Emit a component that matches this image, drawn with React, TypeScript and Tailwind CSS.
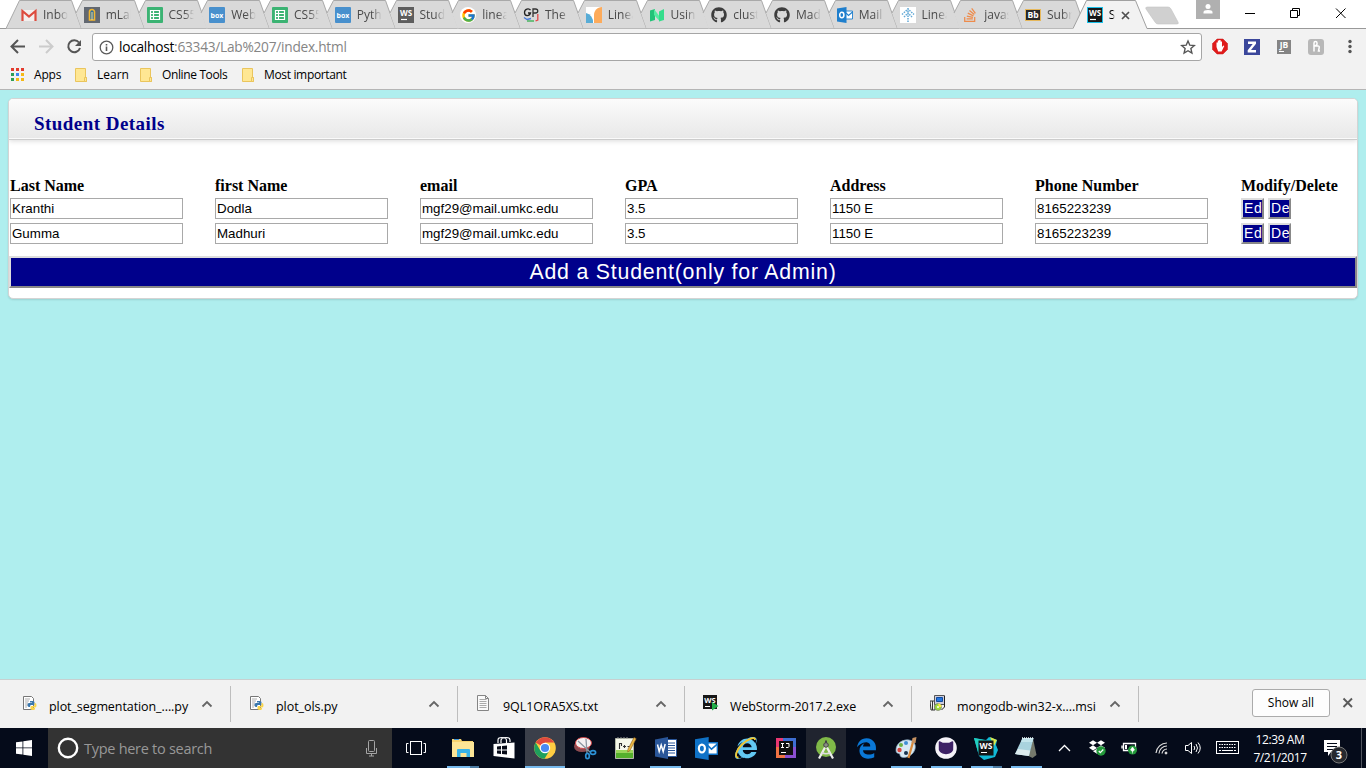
import React from "react";
import { FaGithub, FaStackOverflow, FaInternetExplorer, FaEdgeLegacy, FaDropbox } from "react-icons/fa6";
import { FcGoogle } from "react-icons/fc";

/* ---------- tab favicons ---------- */

const svgText = { fontFamily: "Open Sans, sans-serif", fontWeight: 700 } as const;

const Gmail = () => (
  <svg width="16" height="16" viewBox="0 0 16 16">
    <rect x="1" y="3" width="14" height="11" fill="#f3efee" />
    <path d="M1.500 14V4L8 9.500 14.500 4v10" fill="none" stroke="#dd4b3e" strokeWidth="2.200" />
  </svg>
);
const MLab = () => (
  <svg width="16" height="16" viewBox="0 0 16 16">
    <rect width="16" height="16" fill="#626871" />
    <path d="M5.500 13V5a2.500 2.500 0 0 1 5 0v8z" fill="#2f6fa3" stroke="#f2b631" strokeWidth="1.600" />
    <path d="M8 5v8" stroke="#fbe08d" />
  </svg>
);
const Sheets = () => (
  <svg width="16" height="16" viewBox="0 0 16 16">
    <rect width="16" height="16" rx="1" fill="#3bb373" />
    <path d="M3.500 3.500h9v9h-9zM6.500 3.500v9M3.500 6.500h9M3.500 9.500h9" fill="none" stroke="#fff" strokeWidth="1.200" />
  </svg>
);
const Box = () => (
  <svg width="16" height="16" viewBox="0 0 16 16">
    <rect width="16" height="16" rx="1" fill="#4890cd" />
    <text x="8" y="10.600" fontSize="7" textAnchor="middle" fill="#fff" style={svgText}>box</text>
  </svg>
);
const Ws = ({ bg = "#5d5d5d", edge = "#5d5d5d" }: { bg?: string; edge?: string }) => (
  <svg width="16" height="16" viewBox="0 0 16 16" className="shrink-0">
    <rect x=".5" y=".5" width="15" height="15" fill={bg} stroke={edge} />
    <text x="8" y="9" fontSize="8" textAnchor="middle" fill="#fff" style={svgText}>WS</text>
    <path d="M3 12.500h6" stroke="#fff" strokeWidth="1.200" />
  </svg>
);
const Google = () => (
  <span className="flex size-4 items-center justify-center rounded-full bg-white"><FcGoogle size={15} /></span>
);
const Gp = () => (
  <svg width="16" height="16" viewBox="0 0 16 16" fill="none" strokeWidth="1.300">
    <path d="M7.500 3.200C6 1 1.500 1.500 1.500 5.500s5 4 6 .5H5" stroke="#222" />
    <path d="M10 10V2h2.500c3 0 3 4 0 4H10" stroke="#333" />
    <path d="M1 10.500l3 2 4-1" stroke="#4579d8" />
    <path d="M4 14h7" stroke="#32ad4c" />
    <path d="M14.800 7v6l-2.300 1" stroke="#e54848" />
  </svg>
);
const Split = () => (
  <svg width="16" height="16" viewBox="0 0 16 16">
    <rect width="16" height="16" fill="#fff" />
    <path d="M0 6a9 9 0 0 1 7 10H0z" fill="#58acd6" />
    <path d="M16 0v16H8V8c0-4 3-8 8-8z" fill="#fdab5b" />
  </svg>
);
const Medium = () => (
  <svg width="16" height="16" viewBox="0 0 16 16">
    <path d="M1 3.500l5-1.500v11l-5 1.500z" fill="#23c278" />
    <path d="M5 2l6 8v4.500L5 8z" fill="#55eba1" />
    <path d="M10 4.500l5-2.500v11l-5 1.500z" fill="#35dd8c" />
  </svg>
);
const OutlookMark = ({ size = 16, c = "#1f7fcd" }: { size?: number; c?: string }) => (
  <svg width={size} height={size} viewBox="0 0 16 16">
    <path d="M8.500 4H15.500v8h-7z" fill="#fff" stroke={c} strokeWidth=".9" />
    <path d="M9 6l2.500 2.500L15.500 5" fill="none" stroke={c} strokeWidth="1.100" />
    <path d="M0 1.500L9.500 0v16L0 14.500z" fill={c} />
    <ellipse cx="4.800" cy="8" rx="2.100" ry="2.700" fill="none" stroke="#fff" strokeWidth="1.500" />
  </svg>
);
const Tableau = () => (
  <svg width="16" height="16" viewBox="0 0 16 16">
    <rect width="16" height="16" fill="#fff" />
    <path d="M8 1v14M2 7.500L8 2l6 5.500M4 10l4-4 4 4" fill="none" stroke="#60a8d6" strokeWidth="1.500" strokeDasharray="1.500 1" />
  </svg>
);
const Bb = () => (
  <svg width="16" height="16" viewBox="0 0 16 16">
    <rect x=".5" y="2.500" width="15" height="11" fill="#282828" stroke="#e6b85c" />
    <text x="8" y="11.300" fontSize="8.500" textAnchor="middle" fill="#fff" style={svgText}>Bb</text>
  </svg>
);

type TabData = { title: string; icon: React.ReactNode };
const tabs: TabData[] = [
  { title: "Inbo", icon: <Gmail /> },
  { title: "mLal", icon: <MLab /> },
  { title: "CS55", icon: <Sheets /> },
  { title: "Web", icon: <Box /> },
  { title: "CS55", icon: <Sheets /> },
  { title: "Pyth", icon: <Box /> },
  { title: "Stud", icon: <Ws /> },
  { title: "linea", icon: <Google /> },
  { title: "The", icon: <Gp /> },
  { title: "Linea", icon: <Split /> },
  { title: "Usin", icon: <Medium /> },
  { title: "clust", icon: <FaGithub size={16} color="#3d3d3d" /> },
  { title: "Mad", icon: <FaGithub size={16} color="#3d3d3d" /> },
  { title: "Mail", icon: <OutlookMark /> },
  { title: "Linea", icon: <Tableau /> },
  { title: "javas", icon: <FaStackOverflow size={16} color="#ee8b4b" /> },
  { title: "Subr", icon: <Bb /> },
];

const Fade = ({ children, className }: { children: React.ReactNode; className: string }) => (
  <span className={`overflow-hidden whitespace-nowrap [mask-image:linear-gradient(to_right,#000_60%,transparent)] ${className}`}>{children}</span>
);

function Tab({ tab, first }: { tab: TabData; first: boolean }) {
  return (
    <div className="relative h-[29px] w-[62.750px] shrink-0">
      <svg className="absolute left-0 top-0" width="77" height="29">
        <path d={first ? "M0 28.500L13.500.5H65.500L75.500 28.500z" : "M7 13L13.500.5H65.500L75.500 28.500H12.500z"} fill="#d9d9d9" />
        <path d={first ? "M0 28.500L13.500.5H65.500L75.500 28.500" : "M7 13L13.500.5H65.500L75.500 28.500"} fill="none" stroke="#a9a9a9" />
      </svg>
      <div className="relative flex h-[29px] items-center pl-[15px] pt-px">
        <span className="flex size-4 shrink-0 items-center justify-center">{tab.icon}</span>
        <Fade className="ml-[6px] w-[25px] text-[12px] text-[#4a4a4a]">{tab.title}</Fade>
      </div>
    </div>
  );
}

function TabStrip() {
  return (
    <div className="flex h-[29px] border-b border-[#999] bg-white pl-[6px]">
      {tabs.map((t, i) => <Tab key={i} tab={t} first={i === 0} />)}
      <div className="relative h-[29px] w-[72px] shrink-0">
        <svg className="absolute left-0 top-0" width="76" height="29">
          <path d="M0 28.500L13.500.5H62.500L74 28.500V29H0z" fill="#f2f2f2" />
          <path d="M0 28.500L13.500.5H62.500L74 28.500" fill="none" stroke="#a0a0a0" />
        </svg>
        <div className="relative flex h-[29px] items-center pl-[14px] pt-px">
          <Ws bg="#171717" edge="#19bfe8" />
          <Fade className="ml-[6px] w-[6px] text-[12px] text-black">S</Fade>
          <svg className="ml-[6px]" width="9" height="9"><path d="M1 1l7 7M8 1L1 8" stroke="#505050" strokeWidth="1.700" /></svg>
        </div>
      </div>
      <svg className="mt-[6px]" width="36" height="20">
        <path d="M2.500 1H23q2 0 3 2l7 13q1 2-1 2H13q-2 0-3-2L1 3q-1-2 1.500-2z" fill="#d0d0d0" stroke="#c2c2c2" strokeWidth=".6" />
      </svg>
      <div className="ml-auto flex h-[27px] items-start">
        <svg width="24" height="19" className="mr-[25px] bg-[#b0b0b0]">
          <circle cx="12" cy="6.500" r="2.500" fill="#fff" /><path d="M7.500 13.500V12q0-2 4.500-2t4.500 2v1.500z" fill="#fff" />
        </svg>
        <svg width="121" height="27" fill="none" stroke="#000">
          <path d="M0 13.500h10M45.500 10.500h7v7h-7zM47.500 10.500v-2h7v7h-2M91 8.500l9.500 9.500M100.500 8.500L91 18" />
        </svg>
      </div>
    </div>
  );
}

/* ---------- toolbar ---------- */

function Toolbar() {
  return (
    <div className="flex h-[35px] items-center bg-[#f2f2f2] pt-px">
      <svg width="92" height="28" fill="none" strokeWidth="2">
        <path d="M25 13.500H12M18 7l-6.500 6.500L18 20" stroke="#555" />
        <path d="M39 13.500h13M46 7l6.500 6.500L46 20" stroke="#ccc" />
        <path d="M79 9.500A6 6 0 1 0 80 15" stroke="#555" />
        <path d="M81 7v6h-6z" fill="#555" />
      </svg>
      <div className="flex h-7 w-[1110px] items-center rounded-[3px] border border-[#a6a6a6] bg-white pl-[6px] pr-[5px]">
        <svg width="15" height="15" fill="none" stroke="#5a5a5a">
          <circle cx="7.500" cy="7.500" r="6.300" strokeWidth="1.300" /><path d="M7.500 6.500v4.500M7.500 4v1.500" strokeWidth="1.600" />
        </svg>
        <span className="ml-[5px] whitespace-nowrap text-[13.700px] leading-5 tracking-[-0.250px] text-[#858585]"><span className="text-black">localhost</span>:63343/Lab%207/index.html</span>
        <svg className="ml-auto" width="16" height="16" viewBox="0 0 16 16">
          <path d="M8 2l1.800 4.200 4.500.4-3.400 3 1 4.400L8 11.700 4.100 14l1-4.400-3.400-3 4.500-.4z" fill="none" stroke="#555" strokeWidth="1.400" />
        </svg>
      </div>
      <svg width="164" height="28">
        <path d="M15 6h6l4.500 4.500v6L21 21h-6l-4.500-4.500v-6z" fill="#e01b1b" stroke="#c91818" strokeWidth=".5" />
        <path d="M14.500 14V9.500h1.300V13V7.500h1.400V13V7h1.400v6V8.500H20V14l1.300-1.500 1 .6-2.700 5.400h-3.400z" fill="#fff" />
        <rect x="42" y="6" width="16" height="16" fill="#3b479b" />
        <path d="M46 8.500h8v2.300L49 17h5v2.500h-8.300v-2.300l5-6.200H46z" fill="#fff" />
        <rect x="75" y="7" width="14" height="14" fill="#858585" />
        <text x="82" y="15" fontSize="8.500" fill="#fff" textAnchor="middle" style={svgText}>JB</text>
        <path d="M77 18.500h5" stroke="#fff" />
        <rect x="106" y="6" width="16" height="16" rx="3" fill="#b8b8b8" />
        <path d="M112 18.500V10q0-1.500 1.500-1.500T115 10v1q0 1.500-3 2h4q1.500 0 1.200 1.500l-.7 3.500h1.500" fill="none" stroke="#fff" strokeWidth="1.500" />
        <g fill="#555"><circle cx="148" cy="8.500" r="1.700" /><circle cx="148" cy="13.500" r="1.700" /><circle cx="148" cy="18.500" r="1.700" /></g>
      </svg>
    </div>
  );
}

const appDots = ["#e33b2e", "#e33b2e", "#e33b2e", "#2f9e57", "#3f86f1", "#f5b916", "#2f9e57", "#f5b916", "#f5b916"];

const Folder = () => (
  <svg width="14" height="14" viewBox="0 0 14 14">
    <path d="M.5.5h10v9h1v4H.5z" fill="#ffe793" stroke="#eac55d" /><path d="M9.500 9.500h2v4h-2z" fill="#ffe793" stroke="#eac55d" />
  </svg>
);

function Bookmarks() {
  return (
    <div className="flex h-[26px] items-start border-b border-[#b5b5b5] bg-[#f2f2f2] pl-[11px] pt-[2px] text-[12px] leading-[18px] text-black">
      <svg className="mr-[10px] mt-[2px]" width="13" height="13">
        {appDots.map((c, i) => <rect key={i} x={(i % 3) * 5} y={Math.floor(i / 3) * 5} width="3" height="3" fill={c} />)}
      </svg>
      <span className="w-[41px] tracking-[-0.200px]">Apps</span>
      <span className="mt-[2px] w-[22px]"><Folder /></span>
      <span className="w-[43px]">Learn</span>
      <span className="mt-[2px] w-[22px]"><Folder /></span>
      <span className="w-[80px] whitespace-nowrap tracking-[-0.370px]">Online Tools</span>
      <span className="mt-[2px] w-[22px]"><Folder /></span>
      <span className="whitespace-nowrap tracking-[-0.340px]">Most important</span>
    </div>
  );
}

/* ---------- page ---------- */

const columns = ["Last Name", "first Name", "email", "GPA", "Address", "Phone Number"];
const students = [
  ["Kranthi", "Dodla", "mgf29@mail.umkc.edu", "3.5", "1150 E", "8165223239"],
  ["Gumma", "Madhuri", "mgf29@mail.umkc.edu", "3.5", "1150 E", "8165223239"],
];
const bevel = "border-2 border-t-[#ddd] border-l-[#ddd] border-r-[#888] border-b-[#888] bg-[#00008b] text-white";

function StudentPage() {
  return (
    <main className="h-[589px] bg-[#afeeee] px-2 pt-2">
      <section className="h-[201px] w-[1350px] overflow-hidden rounded-[5px] border border-[#d4d4d4] bg-white shadow-[0_1px_2px_rgba(0,0,0,0.12)]">
        <h1 className="flex h-[41px] items-center border-b border-[#ccc] bg-linear-to-b from-[#fbfbfb] to-[#e8e8e8] pl-[25px] pt-[11px] font-['Liberation_Serif',serif] text-[19px] font-bold tracking-[0.450px] text-[#00008b] shadow-[inset_0_-1px_0_#fafafa,0_1px_5px_rgba(0,0,0,0.15)]">Student Details</h1>
        <div className="mt-[36px] grid grid-cols-[205px_205px_205px_205px_205px_206px_auto] pl-px font-['Liberation_Serif',serif] text-[16px] font-bold leading-[20px] text-black">
          {columns.map((c) => <span key={c}>{c}</span>)}
          <span>Modify/Delete</span>
        </div>
        <div className="mt-[2px] flex flex-col gap-1 pl-px font-['Liberation_Sans',sans-serif] text-[13.330px] text-black">
          {students.map((s, i) => (
            <div key={i} className="grid h-[21px] grid-cols-[205px_205px_205px_205px_205px_206px_auto]">
              {s.map((v, j) => (
                <input key={j} readOnly value={v} className="block h-[21px] w-[173px] border border-[#a9a9a9] bg-white px-px" />
              ))}
              <div className="flex gap-1">
                {["Edit", "Delete"].map((b) => (
                  <button key={b} className={`h-[21px] w-[23px] overflow-hidden whitespace-nowrap pl-px text-left text-[14px] leading-[17px] tracking-[0.700px] ${bevel}`}>{b}</button>
                ))}
              </div>
            </div>
          ))}
        </div>
        <button className={`mt-3 block h-8 w-full text-center font-['Liberation_Sans',sans-serif] text-[21.300px] leading-[28px] tracking-[0.790px] ${bevel}`}>Add a Student(only for Admin)</button>
      </section>
    </main>
  );
}

/* ---------- downloads ---------- */

const PyFile = () => (
  <svg width="16" height="16" viewBox="0 0 16 16">
    <path d="M1.500 1.500h8l2 2v11h-10z" fill="#fff" stroke="#777" />
    <path d="M3 4h5M3 6h4M3 8h3M3 10h3M3 12h2" stroke="#999" strokeWidth=".8" />
    <path d="M8 6h3q1.500 0 1.500 1.500V10H9q-1 0-1 2H7q-1.500 0-1.500-2T7 8h3V7.500H8z" fill="#3b78ae" />
    <path d="M12.500 8H13q1.500 0 1.500 2.300T13 12.500h-2v.5h2v1q0 1-2 1t-2.500-1v-2q0-1 1-1h2q1 0 1-1z" fill="#fbd64a" />
  </svg>
);
const TxtFile = () => (
  <svg width="16" height="18" viewBox="1 0 16 18">
    <path d="M2.500 1.500h8l3 3v12h-11z" fill="#fafafa" stroke="#858585" />
    <path d="M4.500 5.500h7M4.500 7.500h7M4.500 9.500h7M4.500 11.500h7M4.500 13.500h7" stroke="#aaa" /><path d="M10.500 1.500v3h3" fill="none" stroke="#858585" />
  </svg>
);
const WsExe = () => (
  <svg width="16" height="16" viewBox="0 0 16 16">
    <rect y="0" width="14" height="14" fill="#171717" />
    <text x="7" y="7.500" fontSize="7.500" textAnchor="middle" fill="#fff" style={svgText}>WS</text>
    <path d="M2 11.500h5" stroke="#fff" /><path d="M9 7l6.500 4L9 15.500z" fill="#22ae48" />
  </svg>
);
const Msi = () => (
  <svg width="17" height="17" viewBox="1 0 17 17">
    <path d="M1 6h5v9H2z" fill="#f3f3f3" stroke="#333" /><path d="M3.500 6v9" stroke="#333" />
    <path d="M5.500.5h10v9h-10z" fill="#ccd" stroke="#555" /><path d="M7.500 2.500h6v4h-6z" fill="#2376e0" stroke="#124a9c" />
    <path d="M15.500 1v11l-3 3" stroke="#222" fill="none" /><circle cx="9" cy="12" r="3.500" fill="#9edb3d" stroke="#777" strokeWidth=".7" /><circle cx="9" cy="12" r="1" fill="#fff" />
    <path d="M9 8.500a3.500 3.500 0 0 1 3.500 3.500H10z" fill="#ffe942" />
  </svg>
);

const downloads = [
  { name: "plot_segmentation_....py", icon: <PyFile />, track: "tracking-[-0.080px]" },
  { name: "plot_ols.py", icon: <PyFile />, track: "tracking-[-0.050px]" },
  { name: "9QL1ORA5XS.txt", icon: <TxtFile />, track: "tracking-[-0.050px]" },
  { name: "WebStorm-2017.2.exe", icon: <WsExe />, track: "tracking-[-0.130px]" },
  { name: "mongodb-win32-x....msi", icon: <Msi />, track: "tracking-[-0.030px]" },
];

function Downloads() {
  return (
    <div className="flex h-[49px] border-t border-[#c8d0d0] bg-[#f2f2f2] text-[12.500px] text-black">
      {downloads.map((d, i) => (
        <div key={i} className={`mt-[6px] flex h-9 shrink-0 items-center border-r border-[#bebebe] pr-[17px] ${i === 0 ? "w-[231px] pl-[22px]" : "w-[227px] pl-[18px]"}`}>
          <span className="-mt-[2px] w-[27px]">{d.icon}</span>
          <span className={`whitespace-nowrap pt-[5px] leading-5 ${d.track}`}>{d.name}</span>
          <svg className="-mt-[1px] ml-auto" width="12" height="8"><path d="M1.500 6.500L6 2l4.500 4.500" fill="none" stroke="#666" strokeWidth="1.800" /></svg>
        </div>
      ))}
      <button className="ml-auto mt-[9px] flex h-7 w-[78px] items-center justify-center rounded-[3px] border border-[#ababab] bg-[#fdfdfd] text-[12px]">Show all</button>
      <svg className="ml-[12px] mr-[12px] mt-[17px]" width="12" height="12"><path d="M1.500 1.500l8.500 8.500M10 1.500L1.500 10" stroke="#5a5a5a" strokeWidth="1.900" /></svg>
    </div>
  );
}

/* ---------- taskbar ---------- */

const Explorer = () => (
  <svg width="24" height="24" viewBox="0 0 24 24">
    <path d="M1 3h9l1 2h11v16H1z" fill="#f7d36e" /><path d="M3 3h5v1H3z" fill="#3f93d6" /><path d="M1 6h22v15H1z" fill="#fde596" />
    <path d="M6 21v-7q0-1 1-1h11q1 0 1 1v7h-3.500v-4h-6v4z" fill="#39b3e8" />
  </svg>
);
const Store = () => (
  <svg width="24" height="24" viewBox="0 0 24 24">
    <path d="M1.500 8l21-1.500v16L1.500 20z" fill="#fff" /><path d="M6 7V4q0-2.500 4-2.500T14.500 4v3M9 7V4q1-2.500 5-2.500T18 4v2" fill="none" stroke="#fff" strokeWidth="1.200" />
    <path d="M5 10.500l4-.4v3.400H5zM10 10l5-.5v4h-5zM5 14.500h4V18l-4-.4zM10 14.500h5v4l-5-.5z" fill="#070b18" />
  </svg>
);
const Chrome = () => (
  <svg width="24" height="24" viewBox="0 0 24 24">
    <circle cx="12" cy="12" r="10.800" fill="#ffcd42" />
    <path d="M12 12L2.650 6.600A10.800 10.800 0 0 1 21.350 6.600H12z" fill="#e04a3f" />
    <path d="M2.650 6.600A10.800 10.800 0 0 0 11.500 22.800L16.500 14.600 12 12 7.300 14.600z" fill="#1fa05d" />
    <circle cx="12" cy="12" r="5.200" fill="#fff" /><circle cx="12" cy="12" r="4.100" fill="#4a8af4" />
  </svg>
);
const Snip = () => (
  <svg width="24" height="24" viewBox="0 0 24 24" fill="none">
    <ellipse cx="9" cy="10.500" rx="8" ry="5.500" fill="#8d4a50" /><ellipse cx="10.500" cy="7" rx="8" ry="5.500" fill="#f4f1f2" stroke="#d14547" />
    <path d="M5 5l12 11M13 3l1 14" stroke="#8b96a1" strokeWidth="1.300" />
    <ellipse cx="14.500" cy="20" rx="1.800" ry="2.700" stroke="#2c91d6" strokeWidth="1.700" /><ellipse cx="20" cy="16.500" rx="2.600" ry="1.800" stroke="#2c91d6" strokeWidth="1.700" />
  </svg>
);
const Npp = () => (
  <svg width="24" height="24" viewBox="0 0 24 24">
    <path d="M2.500 2.500h18v20h-18z" fill="#f5f8ea" stroke="#b4b9a8" /><path d="M3 14h17v8H3z" fill="#9bd65a" /><path d="M3 17h17v5H3z" fill="#55b02c" />
    <path d="M5 1v2M8 1v2M11 1v2M14 1v2" stroke="#999" /><path d="M6.500 7v6M6 7.500h2.500v2.500M10 10.500h3M11.500 9v3M14.500 10.500h3" stroke="#333" fill="none" strokeWidth="1.100" />
    <path d="M15 13l6-11.500 2.200 1.200L17 14.500 14.700 16z" fill="#e9b742" stroke="#8d5e20" strokeWidth=".6" />
  </svg>
);
const Word = () => (
  <svg width="24" height="24" viewBox="0 0 24 24">
    <path d="M13 3.500h9.500v17H13z" fill="#fff" stroke="#2a5699" /><path d="M14 7h7M14 9.500h7M14 12h7M14 14.500h7M14 17h7" stroke="#2a5699" />
    <path d="M1 3.500L14 1v22L1 20.500z" fill="#2a5699" /><path d="M3.500 8.500l1.700 7 2-6.500 2 6.500 2-7.500" fill="none" stroke="#fff" strokeWidth="1.500" />
  </svg>
);
const Ij = () => (
  <svg width="22" height="22" viewBox="0 0 22 22">
    <path d="M1 1h10L1 16z" fill="#e93772" /><path d="M8 1h13v11H8z" fill="#3e6ed2" /><path d="M1 10h9v11H1z" fill="#f07243" /><path d="M10 10h11v11H10z" fill="#8b4fd0" />
    <rect x="4" y="4" width="14" height="14" fill="#101010" /><path d="M6 6.500h3M7.500 6.500v4M6 10.500h3M11 6.500h3v3q0 1.500-3 1M6 15.500h5" fill="none" stroke="#fff" />
  </svg>
);
const Studio = () => (
  <svg width="24" height="24" viewBox="0 0 24 24">
    <circle cx="12" cy="11" r="10" fill="#80b948" /><path d="M12 4.500v3" stroke="#444" strokeWidth="2" /><circle cx="12" cy="9" r="2.300" fill="#8a8f86" stroke="#444" />
    <path d="M11 11.500L5 22.500M13 11.500l6 11" stroke="#eee" strokeWidth="2.200" /><path d="M7.500 16.500q4.500 2.500 9 0" stroke="#ddd" strokeWidth="1.500" fill="none" />
  </svg>
);
const Paint = () => (
  <svg width="26" height="24" viewBox="0 0 26 24">
    <path d="M3 14C3 8 9 3 16 4s8 8 4 13-13 6-13 2c0-3-4 0-4-5z" fill="#d7e8f3" stroke="#86a8c0" strokeWidth=".7" />
    <circle cx="6.500" cy="14" r="2.200" fill="#d6453e" /><circle cx="8" cy="9" r="2" fill="#6bb044" /><circle cx="13" cy="7" r="2" fill="#3f8dd4" /><circle cx="13" cy="17" r="2" fill="#16324f" />
    <path d="M15.500 22L20 6" stroke="#d98a3c" strokeWidth="2.200" /><path d="M18.500 7l1-5 4-1-1 6z" fill="#c69262" />
  </svg>
);
const Desktop = () => (
  <svg width="24" height="24" viewBox="0 0 24 24">
    <circle cx="12" cy="12" r="10.800" fill="#f5f3f8" /><path d="M5.500 6l3 1.500h7l3-1.500v4q1 7.500-6.500 7.500T5.500 10z" fill="#3d2165" stroke="#3d2165" strokeWidth="1.500" strokeLinejoin="round" />
  </svg>
);
const WsBig = () => (
  <svg width="24" height="24" viewBox="0 0 24 24">
    <path d="M0 2l12 2 3-3 8 3-1 5 2 5-3 7-11 3-5-4z" fill="#11b9d5" /><path d="M0 2l10 2-6 12z" fill="#22d0c0" /><path d="M16 1l7 3-3 6z" fill="#d9e64c" />
    <rect x="4.500" y="4.500" width="15" height="15" fill="#151515" /><text x="12" y="12.800" fontSize="8.500" textAnchor="middle" fill="#fff" style={svgText}>WS</text><path d="M7 16.500h6" stroke="#fff" />
  </svg>
);
const Notepad = () => (
  <svg width="24" height="24" viewBox="0 0 24 24">
    <path d="M19 2.500l3.500 16.500-4 3-4-2z" fill="#75796c" /><path d="M8.500 2h11l-4.500 18L1 18z" fill="#a9d3de" /><path d="M4 13l12 1.500L14.800 20 1 18z" fill="#dcebee" /><path d="M8.500 2h11l-1 4H7z" fill="#c4e5ec" />
    <path d="M8 2h11" stroke="#ecf6f7" strokeWidth="1.500" strokeDasharray="1 1" />
  </svg>
);
const Ie = () => (
  <span className="relative flex size-6 items-center justify-center">
    <FaInternetExplorer size={22} color="#62c8f3" />
    <svg className="absolute inset-0" width="24" height="24"><path d="M4.500 21.500C0 22 2 14 8 8.500S21 0 21 4" fill="none" stroke="#f3c52b" strokeWidth="1.800" /></svg>
  </span>
);

const apps = [
  { icon: <Explorer />, cls: "w-[40px]", bar: "w-8 bg-linear-to-r from-[#76b9ed] from-72% to-[#4c7ba2] to-72%" },
  { icon: <Store />, cls: "w-[42px]", bar: "" },
  { icon: <Chrome />, cls: "w-[40px] bg-[#3b3f4a]", bar: "w-10 bg-[#76b9ed]" },
  { icon: <Snip />, cls: "w-[40px]", bar: "" },
  { icon: <Npp />, cls: "w-[40px]", bar: "" },
  { icon: <Word />, cls: "w-[41px]", bar: "w-[31px] bg-[#76b9ed]" },
  { icon: <OutlookMark size={23} c="#0f72c7" />, cls: "w-[40px]", bar: "" },
  { icon: <Ie />, cls: "w-[40px]", bar: "" },
  { icon: <Ij />, cls: "w-[40px]", bar: "" },
  { icon: <Studio />, cls: "w-[40px] bg-[#20242f]", bar: "" },
  { icon: <FaEdgeLegacy size={21} color="#0a78d7" />, cls: "w-[40px]", bar: "" },
  { icon: <Paint />, cls: "w-[40px]", bar: "w-[31px] bg-[#76b9ed]" },
  { icon: <Desktop />, cls: "w-[40px]", bar: "w-[31px] bg-[#76b9ed]" },
  { icon: <WsBig />, cls: "w-[40px]", bar: "w-[31px] bg-linear-to-r from-[#76b9ed] from-72% to-[#4c7ba2] to-72%" },
  { icon: <Notepad />, cls: "w-[40px]", bar: "w-[31px] bg-[#76b9ed]" },
];

function Taskbar() {
  return (
    <div className="flex h-10 bg-[#050b1a]">
      <div className="flex w-12 items-center justify-center">
        <svg width="16" height="16" fill="#fff"><path d="M0 2.300l6.500-.9v6.100H0zM7.300 1.200L16 0v7.500H7.300zM0 8.300h6.500v6.200L0 13.700zM7.300 8.300H16V16l-8.700-1.300z" /></svg>
      </div>
      <div className="flex w-[344px] items-center bg-[#333] pl-[8px] text-[14.500px] text-[#989898]">
        <svg width="24" height="24"><circle cx="12" cy="12" r="9.200" fill="none" stroke="#fff" strokeWidth="2.400" /></svg>
        <span className="ml-1 whitespace-nowrap pt-px tracking-[-0.280px]">Type here to search</span>
        <svg className="ml-auto mr-[14px]" width="13" height="17" fill="none" stroke="#a5a5a5"><rect x="3.500" y=".5" width="6" height="11" rx="1" /><path d="M1.500 8v5.500h10V8M6.500 13.500v2.500M4 16h5" /></svg>
      </div>
      <div className="flex w-[50px] items-center justify-center pr-[2px]">
        <svg width="22" height="16" fill="none" stroke="#fff"><rect x="5.500" y="1.500" width="11" height="13" /><path d="M3.500 3.500h-2v9h2M18.500 3.500h2v9h-2" /></svg>
      </div>
      {apps.map((a, i) => (
        <div key={i} className={`relative flex shrink-0 items-center justify-center ${i < 2 ? "ml-px -mr-px" : "left-px"} ${a.cls}`}>
          {a.icon}
          {a.bar && <span className={`absolute bottom-0 h-[2px] ${a.bar}`} />}
        </div>
      ))}
      <div className="flex flex-1 items-center pl-[13px] text-white">
        <svg width="13" height="8"><path d="M1 7l5.500-5.500L12 7" fill="none" stroke="#fff" strokeWidth="1.300" /></svg>
        <svg className="ml-[18px]" width="18" height="18" viewBox="0 0 18 18">
          <svg width="16" height="16"><FaDropbox size={16} color="#fff" /></svg>
          <circle cx="12" cy="12" r="4.700" fill="#23993a" /><path d="M9.800 12l1.500 1.700 3-3.200" fill="none" stroke="#fff" strokeWidth="1.200" />
        </svg>
        <svg className="ml-[14px]" width="18" height="16"><path d="M2.500 3.500h12v7h-12zM1 5.500v3" fill="none" stroke="#fff" strokeWidth="1.300" /><path d="M4 5h2v4H4z" fill="#fff" /><circle cx="11.500" cy="10" r="4.500" fill="#23993a" /><path d="M11.500 7l2 3-2 1.500L9.500 10zM11.500 11v2.500" fill="#fff" stroke="#fff" strokeWidth=".6" /></svg>
        <svg className="ml-[15px]" width="16" height="16" fill="none" stroke="#ddd"><path d="M2 13A11 11 0 0 1 13 3M5 13.500A8 8 0 0 1 13 6M8 13.500A5.500 5.500 0 0 1 13 9" strokeWidth="1.200" /><circle cx="12" cy="13" r="1" fill="#fff" /></svg>
        <svg className="ml-[14px]" width="18" height="16" fill="none" stroke="#fff"><path d="M1.500 5.500H4L7.500 2.500v11L4 10.500H1.500zM10 6q1.500 2 0 4M12 4q3 4 0 8M14 2.500q4.500 5.500 0 11" /></svg>
        <svg className="ml-[14px]" width="24" height="14" fill="none" stroke="#fff"><rect x=".5" y=".5" width="22" height="12" /><path d="M3 3.500h17M3 6.500h17" strokeDasharray="1.500 1" /><path d="M3 9.500h2M6 9.500h11M18 9.500h2" /></svg>
        <div className="ml-[9px] w-[62px] whitespace-nowrap pt-px text-center text-[12px] leading-[18px] tracking-[-0.400px]"><div>12:39 AM</div><div>7/21/2017</div></div>
        <svg className="ml-[12px] mt-[5px]" width="26" height="26">
          <path d="M1 2h16v12H8l-3 4v-4H1z" fill="#fff" /><path d="M4 5.500h10M4 8.500h10M4 11.500h7" stroke="#050b1a" />
          <circle cx="16" cy="17" r="8" fill="#26292f" stroke="#777" /><text x="16" y="21" fontSize="11" textAnchor="middle" fill="#fff" style={svgText}>3</text>
        </svg>
      </div>
      <div className="mr-1 w-px bg-[#50545e]" />
    </div>
  );
}

export default function App() {
  return (
    <div className="h-[768px] w-[1366px] overflow-hidden bg-white font-['Open_Sans','Noto_Sans',sans-serif]">
      <TabStrip />
      <Toolbar />
      <Bookmarks />
      <StudentPage />
      <Downloads />
      <Taskbar />
    </div>
  );
}
